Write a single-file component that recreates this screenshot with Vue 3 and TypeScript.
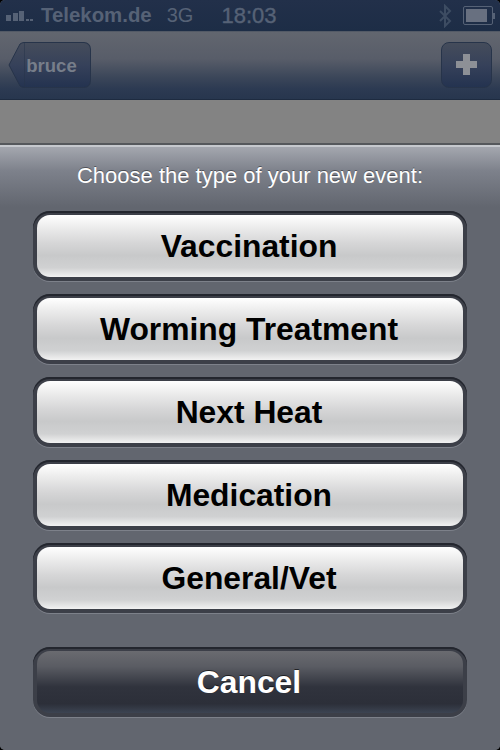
<script setup lang="ts">
const options: string[] = ['Vaccination', 'Worming Treatment', 'Next Heat', 'Medication', 'General/Vet']
</script>

<template>
  <div class="screen">
    <div class="status">
      <div class="left">
        <div class="signal">
          <i class="b1"></i><i class="b2"></i><i class="b3"></i><i class="b4"></i><i class="b5"></i>
        </div>
        <span class="carrier">Telekom.de</span>
        <span class="net">3G</span>
      </div>
      <span class="time">18:03</span>
      <div class="right">
        <svg class="bt" width="14" height="24" viewBox="0 0 14 24" fill="none" stroke="#3d4c62" stroke-width="2">
          <path d="M2 7 L12 17 L7 22 V2 L12 7 L2 17" />
        </svg>
        <div class="battery"><div class="charge"></div></div>
        <div class="nub"></div>
      </div>
    </div>
    <div class="navbar">
      <div class="back">
        <svg class="arrow" width="17" height="46" viewBox="0 0 17 46">
          <defs>
            <linearGradient id="backFill" x1="0" y1="0" x2="0" y2="1">
              <stop offset="0" stop-color="#454c5b" />
              <stop offset=".5" stop-color="#36415a" />
              <stop offset="1" stop-color="#243350" />
            </linearGradient>
          </defs>
          <path d="M17 .5 H16 Q14 .5 12 2 L1 23 L12 44 Q14 45.5 16 45.5 H17 Z" fill="url(#backFill)" stroke="#27344a" stroke-width="1" />
        </svg>
        <span class="back-btn">bruce</span>
      </div>
      <div class="add">
        <span class="plus-h"></span><span class="plus-v"></span>
      </div>
    </div>
    <div class="gap"></div>
    <div class="sheet">
      <p class="title">Choose the type of your new event:</p>
      <div class="list">
        <div v-for="o in options" :key="o" class="well">
          <button class="btn">{{ o }}</button>
        </div>
      </div>
      <div class="well cancel-well">
        <button class="btn cancel">Cancel</button>
      </div>
    </div>
  </div>
</template>

<style>
html, body { margin: 0; background: #000; }
</style>

<style scoped>
.screen {
  width: 500px;
  height: 750px;
  overflow: hidden;
  display: flex;
  flex-direction: column;
  border-radius: 5px;
  font-family: "Liberation Sans", Arial, sans-serif;
  background: #62666f;
}
.status {
  height: 31px;
  flex: none;
  box-sizing: border-box;
  background: linear-gradient(#22304a, #1d2d46);
  display: grid;
  grid-template-columns: 1fr auto 1fr;
  align-items: center;
  padding: 0 5px 0 6px;
  color: #566276;
  font-weight: 700;
}
.left { display: flex; align-items: center; }
.signal { display: flex; align-items: flex-end; gap: 1.5px; height: 11px; margin-right: 5px; width: 30px; flex: none; }
.signal i { display: block; width: 5px; background: #566276; }
.b1 { height: 6px; }
.b2 { height: 8px; }
.b3 { height: 10px; }
.signal .b4, .signal .b5 { height: 2px; width: 3px; }
.carrier { font-size: 20.4px; white-space: nowrap; }
.net { font-size: 20px; font-weight: 400; margin-left: 15px; }
.time { font-size: 22px; font-weight: 400; margin-left: -3px; -webkit-text-stroke: .4px #566276; }
.right { display: flex; align-items: center; justify-content: flex-end; }
.bt { margin-right: 11px; }
.battery {
  height: 13px;
  border: 1.5px solid #566276;
  border-radius: 2px;
  padding: 2px;
  box-sizing: content-box;
  width: 24px;
}
.charge { width: 21px; height: 100%; background: #687080; }
.nub { width: 2px; height: 6px; background: #566276; }
.navbar {
  height: 69px;
  flex: none;
  box-sizing: border-box;
  background: linear-gradient(#62666f 0%, #585d69 40%, #3b4659 68%, #2c3a52 85%, #27364e 100%);
  border-top: 1px solid #535a66;
  border-bottom: 1px solid #1e2b40;
  display: flex;
  justify-content: space-between;
  align-items: center;
  padding: 0 8px 0 8px;
}
.back { display: flex; align-items: center; height: 46px; margin-top: -1px; }
.arrow { display: block; flex: none; }
.back-btn {
  height: 46px;
  width: 66px;
  box-sizing: border-box;
  border: 1px solid #27344a;
  border-left: 0;
  border-radius: 0 7px 7px 0;
  background: linear-gradient(#454c5b, #36415a 50%, #243350);
  color: #777e8a;
  font-size: 18.5px;
  font-weight: 700;
  line-height: 45px;
  text-align: center;
  padding-right: 12px;
}
.add {
  position: relative;
  width: 51px;
  height: 46px;
  margin-top: -1px;
  box-sizing: border-box;
  border: 1px solid #27344a;
  border-radius: 8px;
  background: linear-gradient(#454c5b, #36415a 50%, #243350);
}
.plus-h { position: absolute; left: 14px; top: 18px; width: 21px; height: 7px; background: #8d9096; }
.plus-v { position: absolute; left: 21px; top: 11px; width: 7px; height: 21px; background: #8d9096; }
.gap {
  height: 43px;
  flex: none;
  background: #838383;
  border-bottom: 2px solid #55585c;
  box-sizing: content-box;
}
.sheet {
  flex: 1;
  border-top: 2px solid #c6c9ce;
  background: linear-gradient(#a4a7af 0, #7d818b 24px, #62666f 60px, #62666f 100%);
  padding: 0 33px;
  display: flex;
  flex-direction: column;
}
.title {
  margin: 16px 0 0;
  height: 25px;
  line-height: 25px;
  font-size: 22px;
  color: #fff;
  text-align: center;
  white-space: nowrap;
  text-shadow: 0 -1px 0 rgba(0,0,0,.4);
}
.list { display: flex; flex-direction: column; gap: 13px; margin-top: 23px; }
.well {
  height: 70px;
  box-sizing: border-box;
  padding: 4px;
  border-radius: 17px;
  background: #3c3f48;
  box-shadow: inset 0 2px 0 #23262e, 0 1px 0 #7d818a;
}
.btn {
  display: block;
  width: 100%;
  height: 100%;
  border: 0;
  padding: 0 2px 0 0;
  border-radius: 13px;
  background: linear-gradient(#ffffff 0%, #ececec 20%, #d6d6d7 45%, #c8c9ca 65%, #d0d1d2 85%, #f2f2f2 100%);
  color: #000;
  font-family: inherit;
  font-size: 31.8px;
  font-weight: 700;
  text-align: center;
}
.cancel-well { margin-top: 34px; }
.btn.cancel {
  background: linear-gradient(#6a6b70 0%, #5a5c63 25%, #30333d 58%, #2c2f39 85%, #3c4452 100%);
  color: #fff;
  text-shadow: 0 -1px 0 rgba(0,0,0,.6);
}
</style>
